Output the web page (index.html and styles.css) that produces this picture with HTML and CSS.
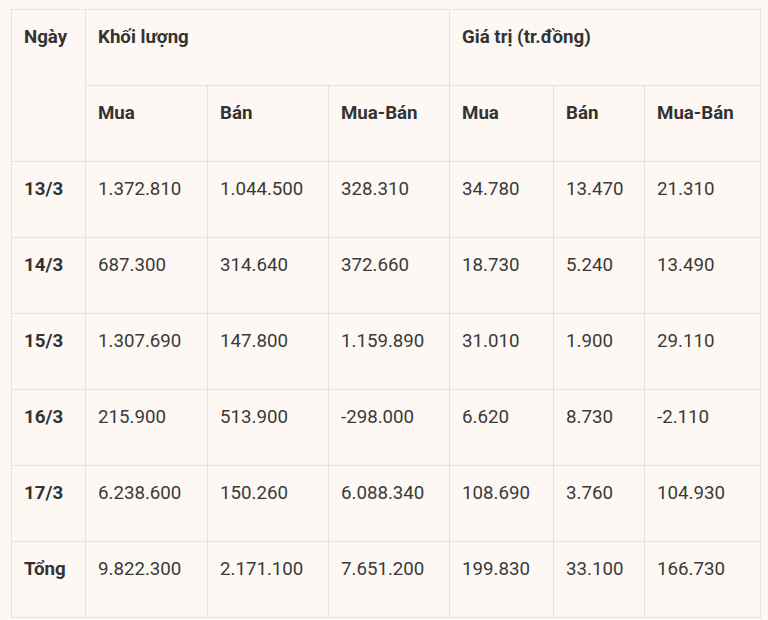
FILE: index.html
```html
<!DOCTYPE html>
<html lang="vi">
<head>
<meta charset="utf-8">
<link rel="stylesheet" href="styles.css">
</head>
<body>
<table class="data">
  <colgroup>
    <col class="c1"><col class="c2"><col class="c3"><col class="c4"><col class="c5"><col class="c6"><col class="c7">
  </colgroup>
  <tr>
    <th rowspan="2">Ngày</th>
    <th colspan="3">Khối lượng</th>
    <th colspan="3">Giá trị (tr.đồng)</th>
  </tr>
  <tr>
    <th>Mua</th><th>Bán</th><th>Mua-Bán</th>
    <th>Mua</th><th>Bán</th><th>Mua-Bán</th>
  </tr>
  <tr>
    <th>13/3</th><td>1.372.810</td><td>1.044.500</td><td>328.310</td><td>34.780</td><td>13.470</td><td>21.310</td>
  </tr>
  <tr>
    <th>14/3</th><td>687.300</td><td>314.640</td><td>372.660</td><td>18.730</td><td>5.240</td><td>13.490</td>
  </tr>
  <tr>
    <th>15/3</th><td>1.307.690</td><td>147.800</td><td>1.159.890</td><td>31.010</td><td>1.900</td><td>29.110</td>
  </tr>
  <tr>
    <th>16/3</th><td>215.900</td><td>513.900</td><td>-298.000</td><td>6.620</td><td>8.730</td><td>-2.110</td>
  </tr>
  <tr>
    <th>17/3</th><td>6.238.600</td><td>150.260</td><td>6.088.340</td><td>108.690</td><td>3.760</td><td>104.930</td>
  </tr>
  <tr>
    <th>Tổng</th><td>9.822.300</td><td>2.171.100</td><td>7.651.200</td><td>199.830</td><td>33.100</td><td>166.730</td>
  </tr>
</table>
</body>
</html>
```

FILE: styles.css
```css
html, body {
  margin: 0;
  padding: 0;
  background: #fdf8f4;
}
body {
  padding: 9px 0 0 11px;
  font-family: Roboto, "Liberation Sans", sans-serif;
  color: #3a3a3a;
}
.data {
  border-collapse: collapse;
  table-layout: fixed;
  width: 749px;
  font-size: 18.7px;
  line-height: 28px;
}
.c1 { width: 74px; }
.c2 { width: 122px; }
.c3 { width: 121px; }
.c4 { width: 121px; }
.c5 { width: 104px; }
.c6 { width: 91px; }
.c7 { width: 116px; }
.data tr { height: 76px; }
.data th, .data td {
  border: 1px solid #e6e2de;
  text-align: left;
  vertical-align: top;
  padding: 13px 12px 0 12px;
  white-space: nowrap;
}
.data th {
  font-weight: 700;
  color: #333;
}
.data td {
  font-weight: 400;
}
```
